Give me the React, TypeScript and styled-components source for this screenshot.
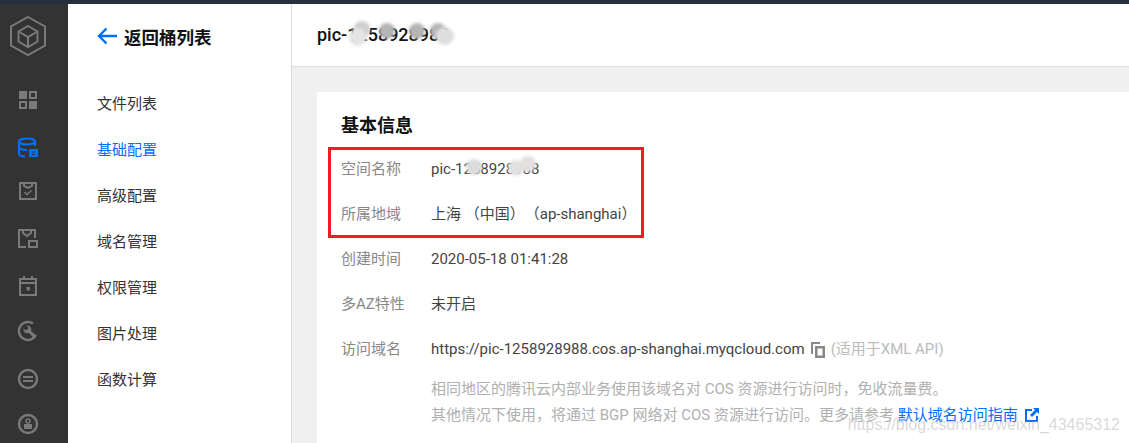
import React from 'react';
import styled, { createGlobalStyle } from 'styled-components';

const FONT = `Roboto, "Noto Sans CJK SC", sans-serif`;

const GlobalStyle = createGlobalStyle`
  html, body {
    margin: 0;
    padding: 0;
    width: 1129px;
    height: 443px;
    overflow: hidden;
    background: #f0f0f0;
    font-family: ${FONT};
  }
  * { box-sizing: border-box; }
`;

const NAV_ITEMS = ['文件列表', '基础配置', '高级配置', '域名管理', '权限管理', '图片处理', '函数计算'];

const IconBase = ({ color = '#7a7a7a', children }: { color?: string; children: React.ReactNode }) => (
  <svg width="22" height="22" viewBox="0 0 22 22" fill="none" stroke={color} strokeWidth="2">
    {children}
  </svg>
);

const SIDE_ICONS: { gap: number; node: React.ReactNode }[] = [
  {
    gap: 0,
    node: (
      <IconBase>
        <rect x="2" y="2" width="8" height="8" fill="#7a7a7a" stroke="none" />
        <rect x="13" y="3" width="6" height="6" />
        <rect x="3" y="13" width="6" height="6" />
        <rect x="12" y="12" width="8" height="8" fill="#7a7a7a" stroke="none" />
      </IconBase>
    ),
  },
  {
    gap: 26,
    node: (
      <IconBase color="#006eff">
        <ellipse cx="10" cy="4.5" rx="8" ry="3" strokeWidth="2.2" />
        <path d="M2 4.500v12c0 2 3 3 6 3M18 4.500V9M2 10.500c1 2 4 2.500 8 2.500" strokeWidth="2.2" />
        <rect x="12" y="12" width="9" height="8" fill="#006eff" stroke="none" />
        <rect x="15" y="14.500" width="3" height="1" fill="#333" stroke="none" />
        <rect x="15" y="17" width="3" height="1" fill="#333" stroke="none" />
      </IconBase>
    ),
  },
  {
    gap: 21,
    node: (
      <IconBase>
        <path d="M3 3h16v16H3zM7 3v3l4 2 4-2V3" />
        <path d="M7.500 12l2.500 2.500 4.500-4" strokeWidth="1.500" />
      </IconBase>
    ),
  },
  {
    gap: 26,
    node: (
      <IconBase>
        <path d="M9 19H2V2h16v8M6 2v3l4 3 4-3V2" />
        <rect x="12" y="13" width="8" height="6" />
      </IconBase>
    ),
  },
  {
    gap: 25,
    node: (
      <IconBase>
        <path d="M3 4h16v16H3zM3 8h16M7 1v4M15 1v4" />
        <rect x="9.500" y="12" width="3.500" height="3.500" fill="#7a7a7a" stroke="none" />
      </IconBase>
    ),
  },
  {
    gap: 23,
    node: (
      <IconBase>
        <path d="M16 3.500A9 9 0 1 0 19 15" strokeWidth="2.4" />
        <path d="M6.500 8.500a4 4 0 0 0 5.500 4.500l5 5.500 2.500-2.500-5.500-5a4 4 0 0 0-4.500-5.500l2 2.500-2.500 2.500z" fill="#7a7a7a" stroke="none" />
      </IconBase>
    ),
  },
  {
    gap: 26,
    node: (
      <IconBase>
        <circle cx="11" cy="11" r="9" strokeWidth="2.4" />
        <path d="M6 9h10M6 13h10" />
      </IconBase>
    ),
  },
  {
    gap: 23,
    node: (
      <IconBase>
        <circle cx="11" cy="11" r="9" strokeWidth="2.4" />
        <rect x="7" y="11" width="8" height="5" fill="#7a7a7a" stroke="none" />
        <circle cx="11" cy="8" r="2" strokeWidth="1.500" />
      </IconBase>
    ),
  },
];

const Blobs = ({ spots }: { spots: { x: number; y: number; r: number; c: string }[] }) => (
  <>
    {spots.map((s, i) => (
      <Blob key={i} style={{ left: s.x - s.r, top: s.y - s.r, width: s.r * 2, height: s.r * 2, background: s.c }} />
    ))}
  </>
);

const App = () => (
  <Page>
    <GlobalStyle />
    <TopStrip />
    <Body>
      <Sidebar>
        <Logo>
          <svg width="38" height="42" viewBox="0 0 38 42" fill="none" stroke="#7a7a7a">
            <path d="M19 2l17 9.500v19L19 40 2 30.500v-19z" strokeWidth="2" />
            <path d="M19 11l9.500 5.500v10L19 32l-9.500-5.500v-10z" strokeWidth="2" />
            <path d="M9.500 16.500L19 22l9.500-5.500M19 22v10" strokeWidth="2" />
          </svg>
        </Logo>
        {SIDE_ICONS.map((item, i) => (
          <SideIcon key={i} $gap={item.gap}>
            {item.node}
          </SideIcon>
        ))}
      </Sidebar>
      <SubNav>
        <BackLink>
          <svg width="20" height="18" viewBox="0 0 20 18" fill="none" stroke="#006eff" strokeWidth="2.4">
            <path d="M20 9H2M9.500 1.500L2 9l7.500 7.500" />
          </svg>
          <span>返回桶列表</span>
        </BackLink>
        <NavList>
          {NAV_ITEMS.map((name) => (
            <NavItem key={name} $active={name === '基础配置'}>
              {name}
            </NavItem>
          ))}
        </NavList>
      </SubNav>
      <Content>
        <Header>
          <BucketTitle>
            pic-1258928988
            <Blobs
              spots={[
                { x: 45, y: 6, r: 8, c: '#cfcfcf' },
                { x: 41, y: 14, r: 9, c: '#e4e4e4' },
                { x: 70, y: 8, r: 8, c: '#b5b5b5' },
                { x: 100, y: 8, r: 8, c: '#b5b5b5' },
                { x: 121, y: 8, r: 8, c: '#b8b8b8' },
                { x: 128, y: 13, r: 9, c: '#dedede' },
              ]}
            />
          </BucketTitle>
        </Header>
        <Main>
          <Card>
            <CardTitle>基本信息</CardTitle>
            <Highlighted>
              <InfoRow>
                <Label>空间名称</Label>
                <Value>
                  pic-1258928988
                  <Blobs
                    spots={[
                      { x: 43, y: 9, r: 8, c: '#dcdcdc' },
                      { x: 85, y: 10, r: 8, c: '#e2e2e2' },
                      { x: 97, y: 6, r: 8, c: '#e4dfdf' },
                    ]}
                  />
                </Value>
              </InfoRow>
              <InfoRow>
                <Label>所属地域</Label>
                <Value>上海 （中国）（ap-shanghai）</Value>
              </InfoRow>
            </Highlighted>
            <InfoRow>
              <Label>创建时间</Label>
              <Value>2020-05-18 01:41:28</Value>
            </InfoRow>
            <InfoRow>
              <Label>多AZ特性</Label>
              <Value>未开启</Value>
            </InfoRow>
            <InfoRow>
              <Label>访问域名</Label>
              <Value>
                https://pic-1258928988.cos.ap-shanghai.myqcloud.com
                <CopyIcon viewBox="0 0 14 16" width="14" height="16">
                  <path d="M0 0h9v2H2v10H0z" fill="#888" />
                  <path d="M4 4h10v12H4zM6.500 6.500v7h5v-7z" fill="#888" fillRule="evenodd" />
                </CopyIcon>
                <Muted>(适用于XML API)</Muted>
              </Value>
            </InfoRow>
            <Hint>
              <p>相同地区的腾讯云内部业务使用该域名对 COS 资源进行访问时，免收流量费。</p>
              <p>
                其他情况下使用，将通过 BGP 网络对 COS 资源进行访问。更多请参考 <GuideLink>默认域名访问指南</GuideLink>
                <svg width="14" height="14" viewBox="0 0 14 14">
                  <path d="M0 1h7v2H2v9h9V8h2v6H0z" fill="#006eff" />
                  <path d="M8 0h6v6l-2-2-5 5-2-2 5-5z" fill="#006eff" />
                </svg>
              </p>
            </Hint>
          </Card>
        </Main>
      </Content>
    </Body>
    <Watermark>https://blog.csdn.net/weixin_43465312</Watermark>
  </Page>
);

const Page = styled.div`
  position: relative;
  width: 1129px;
  height: 443px;
  overflow: hidden;
  display: flex;
  flex-direction: column;
`;

const TopStrip = styled.div`
  height: 4px;
  flex: none;
  background: #262f3e;
`;

const Body = styled.div`
  flex: 1;
  min-height: 0;
  display: flex;
`;

const Sidebar = styled.div`
  width: 68px;
  flex: none;
  padding: 11px 12px 0 0;
  background: #333333;
  display: flex;
  flex-direction: column;
  align-items: center;
`;

const Logo = styled.div`
  height: 42px;
  margin-bottom: 32px;
  display: flex;
`;

const SideIcon = styled.div<{ $gap: number }>`
  height: 22px;
  margin-top: ${(p) => p.$gap}px;
  display: flex;
`;

const SubNav = styled.div`
  width: 224px;
  flex: none;
  padding: 21px 0 0 29px;
  background: #fff;
  border-right: 1px solid #dddddd;
`;

const BackLink = styled.div`
  display: flex;
  align-items: center;
  gap: 7px;
  height: 24px;
  margin-top: -1px;
  font-size: 17.500px;
  font-weight: 700;
  color: #111;
  white-space: nowrap;
`;

const NavList = styled.div`
  margin-top: 45px;
  display: flex;
  flex-direction: column;
  gap: 24px;
`;

const NavItem = styled.div<{ $active?: boolean }>`
  height: 22px;
  line-height: 22px;
  font-size: 15px;
  color: ${(p) => (p.$active ? '#006eff' : '#333')};
`;

const Content = styled.div`
  flex: 1;
  min-width: 0;
  display: flex;
  flex-direction: column;
`;

const Header = styled.div`
  height: 63px;
  flex: none;
  padding: 19px 0 0 25px;
  background: #fff;
  border-bottom: 1px solid #dddddd;
`;

const BucketTitle = styled.div`
  position: relative;
  display: inline-block;
  font-size: 18px;
  line-height: 24px;
  font-weight: 500;
  color: #111;
`;

const Blob = styled.span`
  position: absolute;
  border-radius: 50%;
  filter: blur(1.500px);
`;

const Main = styled.div`
  flex: 1;
  min-height: 0;
  padding: 25px 0 0 25px;
  background: #f0f0f0;
`;

const Card = styled.div`
  height: 400px;
  padding: 22px 0 0 24px;
  background: #fff;
`;

const CardTitle = styled.div`
  font-size: 18px;
  line-height: 24px;
  font-weight: 700;
  color: #111;
  margin-bottom: 9px;
`;

const Highlighted = styled.div`
  width: 316px;
  height: 91px;
  margin: 0 0 9px -13px;
  padding: 7px 0 0 10px;
  border: 3px solid #ee1c25;
  display: flex;
  flex-direction: column;
  gap: 23px;
`;

const InfoRow = styled.div`
  height: 22px;
  padding-top: 1px;
  display: flex;
  align-items: baseline;
  font-size: 15px;
  line-height: 22px;
  & + & {
    margin-top: 23px;
  }
  ${Highlighted} & + & {
    margin-top: 0;
  }
`;

const Label = styled.div`
  width: 90px;
  flex: none;
  color: #888;
`;

const Value = styled.div`
  position: relative;
  color: #444;
  white-space: nowrap;
  text-spacing-trim: space-all;
`;

const CopyIcon = styled.svg`
  margin: 0 6px 0 6px;
  vertical-align: -4px;
`;

const Muted = styled.span`
  color: #bbb;
`;

const Hint = styled.div`
  margin: 17px 0 0 90px;
  font-size: 15px;
  line-height: 26px;
  color: #b0b0b0;
  white-space: nowrap;
  p {
    margin: 0;
    display: flex;
    align-items: center;
    white-space: pre;
  }
  svg {
    margin-left: 7px;
  }
`;

const GuideLink = styled.span`
  color: #006eff;
`;

const Watermark = styled.div`
  position: absolute;
  right: 9px;
  bottom: 9px;
  font-family: "Liberation Sans", Arial, sans-serif;
  font-size: 16px;
  line-height: 18px;
  color: rgba(170, 170, 170, 0.45);
`;

export default App;
